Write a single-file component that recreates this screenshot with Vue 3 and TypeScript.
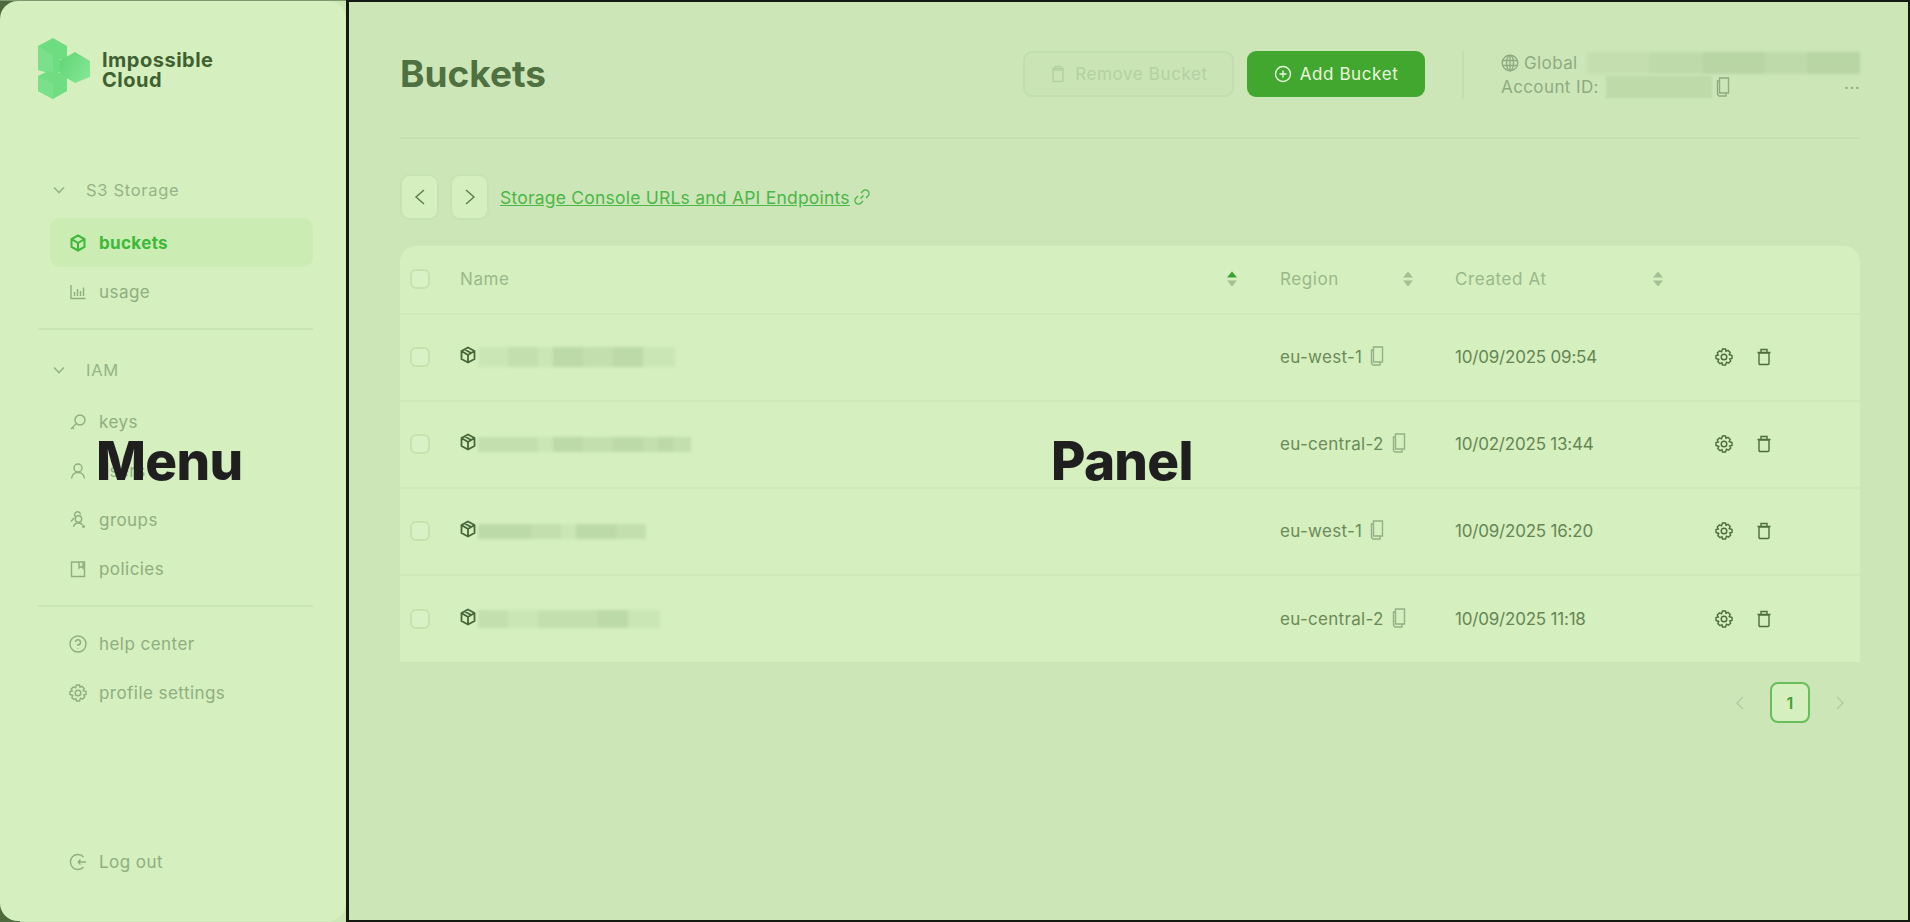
<script setup lang="ts">
interface Blot {
  w: number;
  c: string;
}
interface Bucket {
  region: string;
  created: string;
  h: number;
  blots: Blot[];
}

const soft = '#c3dfae';
const mid = '#bcd9a8';
const pale = '#cbe6b5';

const buckets: Bucket[] = [
  {
    region: 'eu-west-1',
    created: '10/09/2025 09:54',
    h: 20,
    blots: [
      { w: 30, c: pale },
      { w: 30, c: soft },
      { w: 15, c: pale },
      { w: 30, c: mid },
      { w: 30, c: soft },
      { w: 30, c: mid },
      { w: 32, c: pale },
    ],
  },
  {
    region: 'eu-central-2',
    created: '10/02/2025 13:44',
    h: 15,
    blots: [
      { w: 60, c: soft },
      { w: 15, c: pale },
      { w: 30, c: mid },
      { w: 30, c: soft },
      { w: 30, c: mid },
      { w: 15, c: soft },
      { w: 15, c: mid },
      { w: 18, c: soft },
    ],
  },
  {
    region: 'eu-west-1',
    created: '10/09/2025 16:20',
    h: 15,
    blots: [
      { w: 53, c: mid },
      { w: 30, c: soft },
      { w: 15, c: pale },
      { w: 40, c: mid },
      { w: 30, c: soft },
    ],
  },
  {
    region: 'eu-central-2',
    created: '10/09/2025 11:18',
    h: 18,
    blots: [
      { w: 30, c: soft },
      { w: 30, c: pale },
      { w: 60, c: soft },
      { w: 30, c: mid },
      { w: 32, c: pale },
    ],
  },
];

const accountBlots: Blot[] = [
  { w: 50, c: '#c4deaf' },
  { w: 40, c: '#bfdaaa' },
  { w: 50, c: '#b8d5a4' },
  { w: 30, c: '#bfdaaa' },
  { w: 40, c: '#b8d5a4' },
];
</script>

<template>
  <div class="page">
    <aside class="menu">
      <div class="brand">
        <svg class="logo" viewBox="0 0 52 62" width="52" height="62">
          <defs>
            <linearGradient id="faceLight" x1="0" y1="0" x2="1" y2="0.6">
              <stop offset="0" stop-color="#5fd473" />
              <stop offset="1" stop-color="#82e592" />
            </linearGradient>
          </defs>
          <path d="M15 0 29 8V24L22 21V34L15 36 0 32V8Z" fill="#6edc80" />
          <path d="M14 31 29 39V53L15 61 0 53V38Z" fill="#70dd82" />
          <path d="M37 14 52 23V39L37 45 22 36V22.500Z" fill="url(#faceLight)" />
          <path d="M0 8 15 17V34L0 32Z" fill="#7ae08b" />
          <path d="M0 38 15 46V61L0 53Z" fill="#7ae08b" />
        </svg>
        <div class="brand-name">Impossible<br />Cloud</div>
      </div>

      <div class="group-title first">
        <svg class="chev" viewBox="0 0 14 14" width="14" height="14"><path d="M2 4.500 7 9.500 12 4.500" /></svg>
        <span>S3 Storage</span>
      </div>
      <a class="item active">
        <svg class="ico" viewBox="0 0 18 18" width="18" height="18"><path d="M9 1.500 15.500 5V13L9 16.500 2.500 13V5Z M2.500 5 9 9 15.500 5 M9 9V16.500" /></svg>
        <span>buckets</span>
      </a>
      <a class="item">
        <svg class="ico" viewBox="0 0 18 18" width="18" height="18"><path d="M2 2V15.500H16.500 M5.500 13V9 M8.500 13V6 M11.500 13V8 M14.500 13V4.500" /></svg>
        <span>usage</span>
      </a>
      <div class="rule"></div>

      <div class="group-title second">
        <svg class="chev" viewBox="0 0 14 14" width="14" height="14"><path d="M2 4.500 7 9.500 12 4.500" /></svg>
        <span>IAM</span>
      </div>
      <a class="item">
        <svg class="ico" viewBox="0 0 18 18" width="18" height="18"><circle cx="11" cy="7" r="5" /><path d="M7.500 10.500 2 16 M3.500 14.500 5 16" /></svg>
        <span>keys</span>
      </a>
      <a class="item">
        <svg class="ico" viewBox="0 0 18 18" width="18" height="18"><circle cx="9" cy="6" r="4" /><path d="M2.500 16.500C3 12.500 5.500 10.500 9 10.500S15 12.500 15.500 16.500" /></svg>
        <span>users</span>
      </a>
      <a class="item">
        <svg class="ico" viewBox="0 0 18 18" width="18" height="18"><circle cx="9.500" cy="8" r="3.200" /><path d="M4.500 16C5 13 7 12 9.500 12S13 13 13.500 14 M6.500 6A3 3 0 1 1 11.500 3.500 M2 10.500 5 7 M14.500 14V17 M13 15.500H16" /></svg>
        <span>groups</span>
      </a>
      <a class="item">
        <svg class="ico" viewBox="0 0 18 18" width="18" height="18"><path d="M2.500 2H15.500V16.500H2.500Z M10 2V8L12 6.500 14 8V2" /></svg>
        <span>policies</span>
      </a>
      <div class="rule low"></div>

      <a class="item help">
        <svg class="ico" viewBox="0 0 18 18" width="18" height="18"><circle cx="9" cy="9" r="8" /><path d="M6.500 7A2.500 2.500 0 1 1 9 9.800V11 M9 13V13.600" /></svg>
        <span>help center</span>
      </a>
      <a class="item">
        <svg class="ico" viewBox="0 0 18 18" width="18" height="18"><path d="M7.500 1H10.500L11 3.300 13 2.300 15.200 4.500 14.200 6.500 17 7.500V10.500L14.700 11 15.700 13 13.500 15.200 11.500 14.200 10.500 17H7.500L7 14.700 5 15.700 2.800 13.500 3.800 11.500 1 10.500V7.500L3.300 7 2.300 5 4.500 2.800 6.500 3.800Z" /><circle cx="9" cy="9" r="2.800" /></svg>
        <span>profile settings</span>
      </a>

      <a class="item logout">
        <svg class="ico" viewBox="0 0 18 18" width="18" height="18"><path d="M14.500 4A7.500 7.500 0 1 0 14.500 14 M9 9H17 M9 9 11.500 6.500 M9 9 11.500 11.500" /></svg>
        <span>Log out</span>
      </a>

      <div class="tag tag-menu">Menu</div>
    </aside>

    <main class="panel">
      <header class="top">
        <h1>Buckets</h1>
        <button class="btn ghost">
          <svg viewBox="0 0 18 18" width="18" height="18"><path d="M4 5H14V15.500A1 1 0 0 1 13 16.500H5A1 1 0 0 1 4 15.500Z M3 3.500H15 M6 3.500V1.500H12V3.500" /></svg>
          Remove Bucket
        </button>
        <button class="btn primary">
          <svg viewBox="0 0 18 18" width="18" height="18"><circle cx="9" cy="9" r="7.500" /><path d="M9 5.500V12.500 M5.500 9H12.500" /></svg>
          Add Bucket
        </button>
        <div class="vline"></div>
        <div class="account">
          <div class="acc-line">
            <svg class="globe" viewBox="0 0 18 18" width="18" height="18"><circle cx="9" cy="9" r="7.800" /><ellipse cx="9" cy="9" rx="3.500" ry="7.800" /><path d="M9 1.200V16.800 M1.500 6.500H16.500 M1.500 11.500H16.500" /></svg>
            <span>Global</span>
            <span class="blots big">
              <i v-for="(b, i) in accountBlots" :key="i" :style="{ width: b.w + 'px', background: b.c }"></i>
            </span>
          </div>
          <div class="acc-line">
            <span>Account ID:</span>
            <span class="acc-id"></span>
            <svg class="copy" viewBox="0 0 14 20" width="14" height="20"><path d="M3 4H1.500V17.500L3 19H10V16 M3.500 1H12.500V16H3.500Z" /></svg>
            <span class="more">...</span>
          </div>
        </div>
      </header>

      <div class="nav-row">
        <button class="step"><svg viewBox="0 0 14 20" width="14" height="20"><path d="M11 3 3 10 11 17" /></svg></button>
        <button class="step"><svg viewBox="0 0 14 20" width="14" height="20"><path d="M3 3 11 10 3 17" /></svg></button>
        <a class="link">Storage Console URLs and API Endpoints</a>
        <svg class="link-ico" viewBox="0 0 16 16" width="16" height="16"><path d="M6.500 9.500 9.500 6.500 M7 4 9 2A3.200 3.200 0 0 1 14 7L12 9 M9 12 7 14A3.200 3.200 0 0 1 2 9L4 7" /></svg>
      </div>

      <section class="table">
        <div class="row head">
          <span class="check"></span>
          <span class="cell sorted">Name
            <span class="sort"><b class="up on"></b><b class="down"></b></span>
          </span>
          <span class="cell region-h">Region
            <span class="sort"><b class="up"></b><b class="down"></b></span>
          </span>
          <span class="cell created-h">Created At
            <span class="sort"><b class="up"></b><b class="down"></b></span>
          </span>
        </div>
        <div v-for="(b, i) in buckets" :key="i" class="row">
          <span class="check"></span>
          <span class="cell name">
            <svg class="cube" viewBox="0 0 16 18" width="16" height="18"><path d="M8 1.500 14.500 5V13L8 16.500 1.500 13V5Z M1.500 5 8 9 14.500 5 M8 9V16.500 M4.500 3.300 11 7" /></svg>
            <span class="blots">
              <i v-for="(p, j) in b.blots" :key="j" :style="{ width: p.w + 'px', height: b.h + 'px', background: p.c }"></i>
            </span>
          </span>
          <span class="cell">
            {{ b.region }}
            <svg class="copy" viewBox="0 0 14 20" width="14" height="20"><path d="M3 4H1.500V17.500L3 19H10V16 M3.500 1H12.500V16H3.500Z" /></svg>
          </span>
          <span class="cell date">{{ b.created }}</span>
          <span class="actions">
            <svg viewBox="0 0 18 18" width="18" height="18"><path d="M7.500 1H10.500L11 3.300 13 2.300 15.200 4.500 14.200 6.500 17 7.500V10.500L14.700 11 15.700 13 13.500 15.200 11.500 14.200 10.500 17H7.500L7 14.700 5 15.700 2.800 13.500 3.800 11.500 1 10.500V7.500L3.300 7 2.300 5 4.500 2.800 6.500 3.800Z" /><circle cx="9" cy="9" r="2.800" /></svg>
            <svg viewBox="0 0 18 18" width="18" height="18"><path d="M4 5H14V15.500A1 1 0 0 1 13 16.500H5A1 1 0 0 1 4 15.500Z M2.500 4.500H15.500 M6 4.500V1.500H12V4.500" /></svg>
          </span>
        </div>
      </section>

      <div class="pager">
        <svg viewBox="0 0 12 16" width="12" height="16"><path d="M9 2 3 8 9 14" /></svg>
        <span class="page-no">1</span>
        <svg viewBox="0 0 12 16" width="12" height="16"><path d="M3 2 9 8 3 14" /></svg>
      </div>

      <div class="tag tag-panel">Panel</div>
    </main>
  </div>
</template>

<style>
html,
body {
  margin: 0;
  background: #cde6b8;
}
</style>

<style scoped>
.page {
  display: flex;
  height: 922px;
  width: 1910px;
  overflow: hidden;
  font-family: Inter, "Liberation Sans", sans-serif;
  color: #5d7d4c;
  background:
    linear-gradient(#7f9a6f, #7f9a6f) top / 100% 1px no-repeat,
    linear-gradient(to right, #4f6a3f 0 20px, #cde6b8 20px);
}
svg {
  fill: none;
  stroke: currentColor;
  stroke-width: 1.4;
  flex: none;
}
.logo {
  stroke: none;
}
a {
  text-decoration: none;
}

.menu {
  position: relative;
  width: 346px;
  height: 920px;
  margin-top: 1px;
  box-sizing: border-box;
  padding: 37px 33px 0 38px;
  background: #d5efbe;
  border-radius: 18px;
  display: flex;
  flex-direction: column;
}
.brand {
  display: flex;
  align-items: center;
  gap: 12px;
}
.brand-name {
  font-size: 20px;
  line-height: 20px;
  font-weight: 700;
  letter-spacing: 0.5px;
  color: #3f6030;
  margin-top: 2px;
}
.group-title {
  display: flex;
  align-items: center;
  gap: 20px;
  height: 30px;
  padding-left: 14px;
  font-size: 16.500px;
  letter-spacing: 0.7px;
  color: #96b488;
}
.group-title svg {
  stroke-width: 1.6;
}
.group-title.first {
  margin-top: 75px;
  margin-bottom: 13px;
}
.group-title.second {
  margin-top: 25px;
  margin-bottom: 12px;
}
.item {
  display: flex;
  align-items: center;
  gap: 12px;
  height: 49px;
  padding-left: 19px;
  margin-left: 12px;
  border-radius: 10px;
  font-size: 17px;
  letter-spacing: 0.45px;
  color: #8fae80;
}
.item.active {
  background: #cbecb2;
  color: #3db83a;
  font-weight: 700;
  letter-spacing: 0.35px;
}
.item.active svg {
  stroke-width: 2;
}
.rule {
  height: 2px;
  background: #c9e5b3;
  margin-top: 12px;
}
.help {
  margin-top: 12px;
}
.logout {
  margin-top: auto;
  margin-bottom: 35px;
}
.tag {
  position: absolute;
  font-size: 53px;
  font-weight: 800;
  line-height: 1;
  color: #1f1f1f;
  letter-spacing: -0.7px;
}
.tag-menu {
  left: 96px;
  top: 434px;
}
.tag-panel {
  left: 702px;
  top: 433px;
}

.panel {
  position: relative;
  flex: 1;
  box-sizing: border-box;
  padding: 0 48px 0 51px;
  background: #cde6b8;
  border: 2px solid #141a10;
  border-left-width: 3px;
}
.top {
  display: flex;
  align-items: center;
  height: 125px;
  padding-top: 10px;
  border-bottom: 2px solid #c6e0b0;
  box-sizing: content-box;
}
h1 {
  margin: 0 auto 0 0;
  font-size: 37px;
  font-weight: 700;
  color: #4f7040;
  position: relative;
  top: -1px;
}
.btn {
  display: flex;
  align-items: center;
  justify-content: center;
  gap: 8px;
  height: 46px;
  box-sizing: border-box;
  border-radius: 9px;
  font: inherit;
  font-size: 17px;
  letter-spacing: 0.6px;
  position: relative;
  top: -1px;
}
.btn.ghost {
  width: 211px;
  margin-right: 13px;
  color: #b4d1a1;
  background: #cae4b5;
  border: 2px solid #c3deae;
}
.btn.primary {
  width: 178px;
  color: #e9f7dd;
  background: #42a72f;
  border: none;
}
.vline {
  width: 2px;
  height: 48px;
  background: #c4dead;
  margin: 0 37px;
}
.account {
  width: 359px;
  font-size: 17px;
  letter-spacing: 0.4px;
  color: #8fab80;
}
.acc-line {
  display: flex;
  align-items: center;
  gap: 5px;
  height: 24px;
  position: relative;
}
.blots {
  display: flex;
  height: 22px;
  align-items: center;
  filter: blur(1.5px);
}
.blots i {
  display: block;
  height: 100%;
}
.blots.big {
  margin-left: 4px;
  flex: 1;
}
.blots.big i {
  flex: 1 1 auto;
}
.acc-id {
  width: 106px;
  height: 22px;
  background: #bedaa9;
  margin-left: 2px;
  filter: blur(1px);
}
.acc-line .copy {
  margin-left: -1px;
}
.more {
  margin-left: auto;
  position: relative;
  top: -4px;
  color: #8fab80;
}
.nav-row {
  display: flex;
  align-items: center;
  margin-top: 35px;
  height: 46px;
}
.step {
  width: 39px;
  height: 46px;
  margin-right: 11px;
  display: flex;
  align-items: center;
  justify-content: center;
  background: #d5efbe;
  border: 2px solid #c8e3b2;
  border-radius: 10px;
  padding: 0;
  color: #5d7d4c;
}
.link {
  font-size: 17.500px;
  letter-spacing: 0.22px;
  color: #4bb748;
  text-decoration: underline;
  white-space: nowrap;
}
.link-ico {
  margin-left: 4px;
  color: #4bb748;
}
.table {
  margin-top: 26px;
  background: #d5efbe;
  border-radius: 16px 16px 0 0;
}
.row {
  display: grid;
  grid-template-columns: 60px 820px 175px 260px 1fr;
  align-items: center;
  height: 87px;
  padding-bottom: 1px;
  border-bottom: 2px solid #cfe9b9;
  box-sizing: border-box;
  font-size: 17px;
  letter-spacing: 0.3px;
  color: #6b8a59;
}
.row:last-child {
  height: 86px;
  border-bottom: none;
}
.row.head {
  height: 69px;
  letter-spacing: 0.6px;
  color: #9ab88b;
}
.check {
  width: 20px;
  height: 20px;
  margin-left: 10px;
  box-sizing: border-box;
  border: 2px solid #c6e2af;
  border-radius: 6px;
  background: #d9f1c5;
}
.cell {
  display: flex;
  align-items: center;
  position: relative;
}
.sort {
  position: absolute;
  display: flex;
  flex-direction: column;
  gap: 3px;
  top: 50%;
  transform: translateY(-50%);
}
.sorted .sort {
  left: 767px;
}
.region-h .sort {
  left: 123px;
}
.created-h .sort {
  left: 198px;
}
.sort b {
  display: block;
  width: 0;
  height: 0;
  border-left: 5px solid transparent;
  border-right: 5px solid transparent;
}
.sort .up {
  border-bottom: 6px solid #a5c097;
}
.sort .up.on {
  border-bottom-color: #3ba02f;
}
.sort .down {
  border-top: 6px solid #a5c097;
}
.name {
  gap: 0;
  height: 30px;
  color: #46663a;
}
.cube {
  position: relative;
  top: -2px;
  stroke-width: 1.8;
}
.name .blots {
  margin-left: 2px;
}
.cell .copy {
  margin-left: 8px;
  color: #94b086;
  position: relative;
  top: -1px;
}
.date {
  color: #668555;
  letter-spacing: -0.2px;
}
.actions {
  display: flex;
  gap: 22px;
  color: #4d6d3c;
}
.pager {
  display: flex;
  justify-content: flex-end;
  align-items: center;
  gap: 24px;
  margin-top: 20px;
  margin-right: 14px;
  color: #b0cba0;
}
.page-no {
  width: 40px;
  height: 41px;
  box-sizing: border-box;
  display: flex;
  align-items: center;
  justify-content: center;
  border: 2px solid #68bd5d;
  border-radius: 8px;
  background: #d5efbe;
  color: #3fa032;
  font-weight: 600;
  font-size: 16px;
}
</style>
